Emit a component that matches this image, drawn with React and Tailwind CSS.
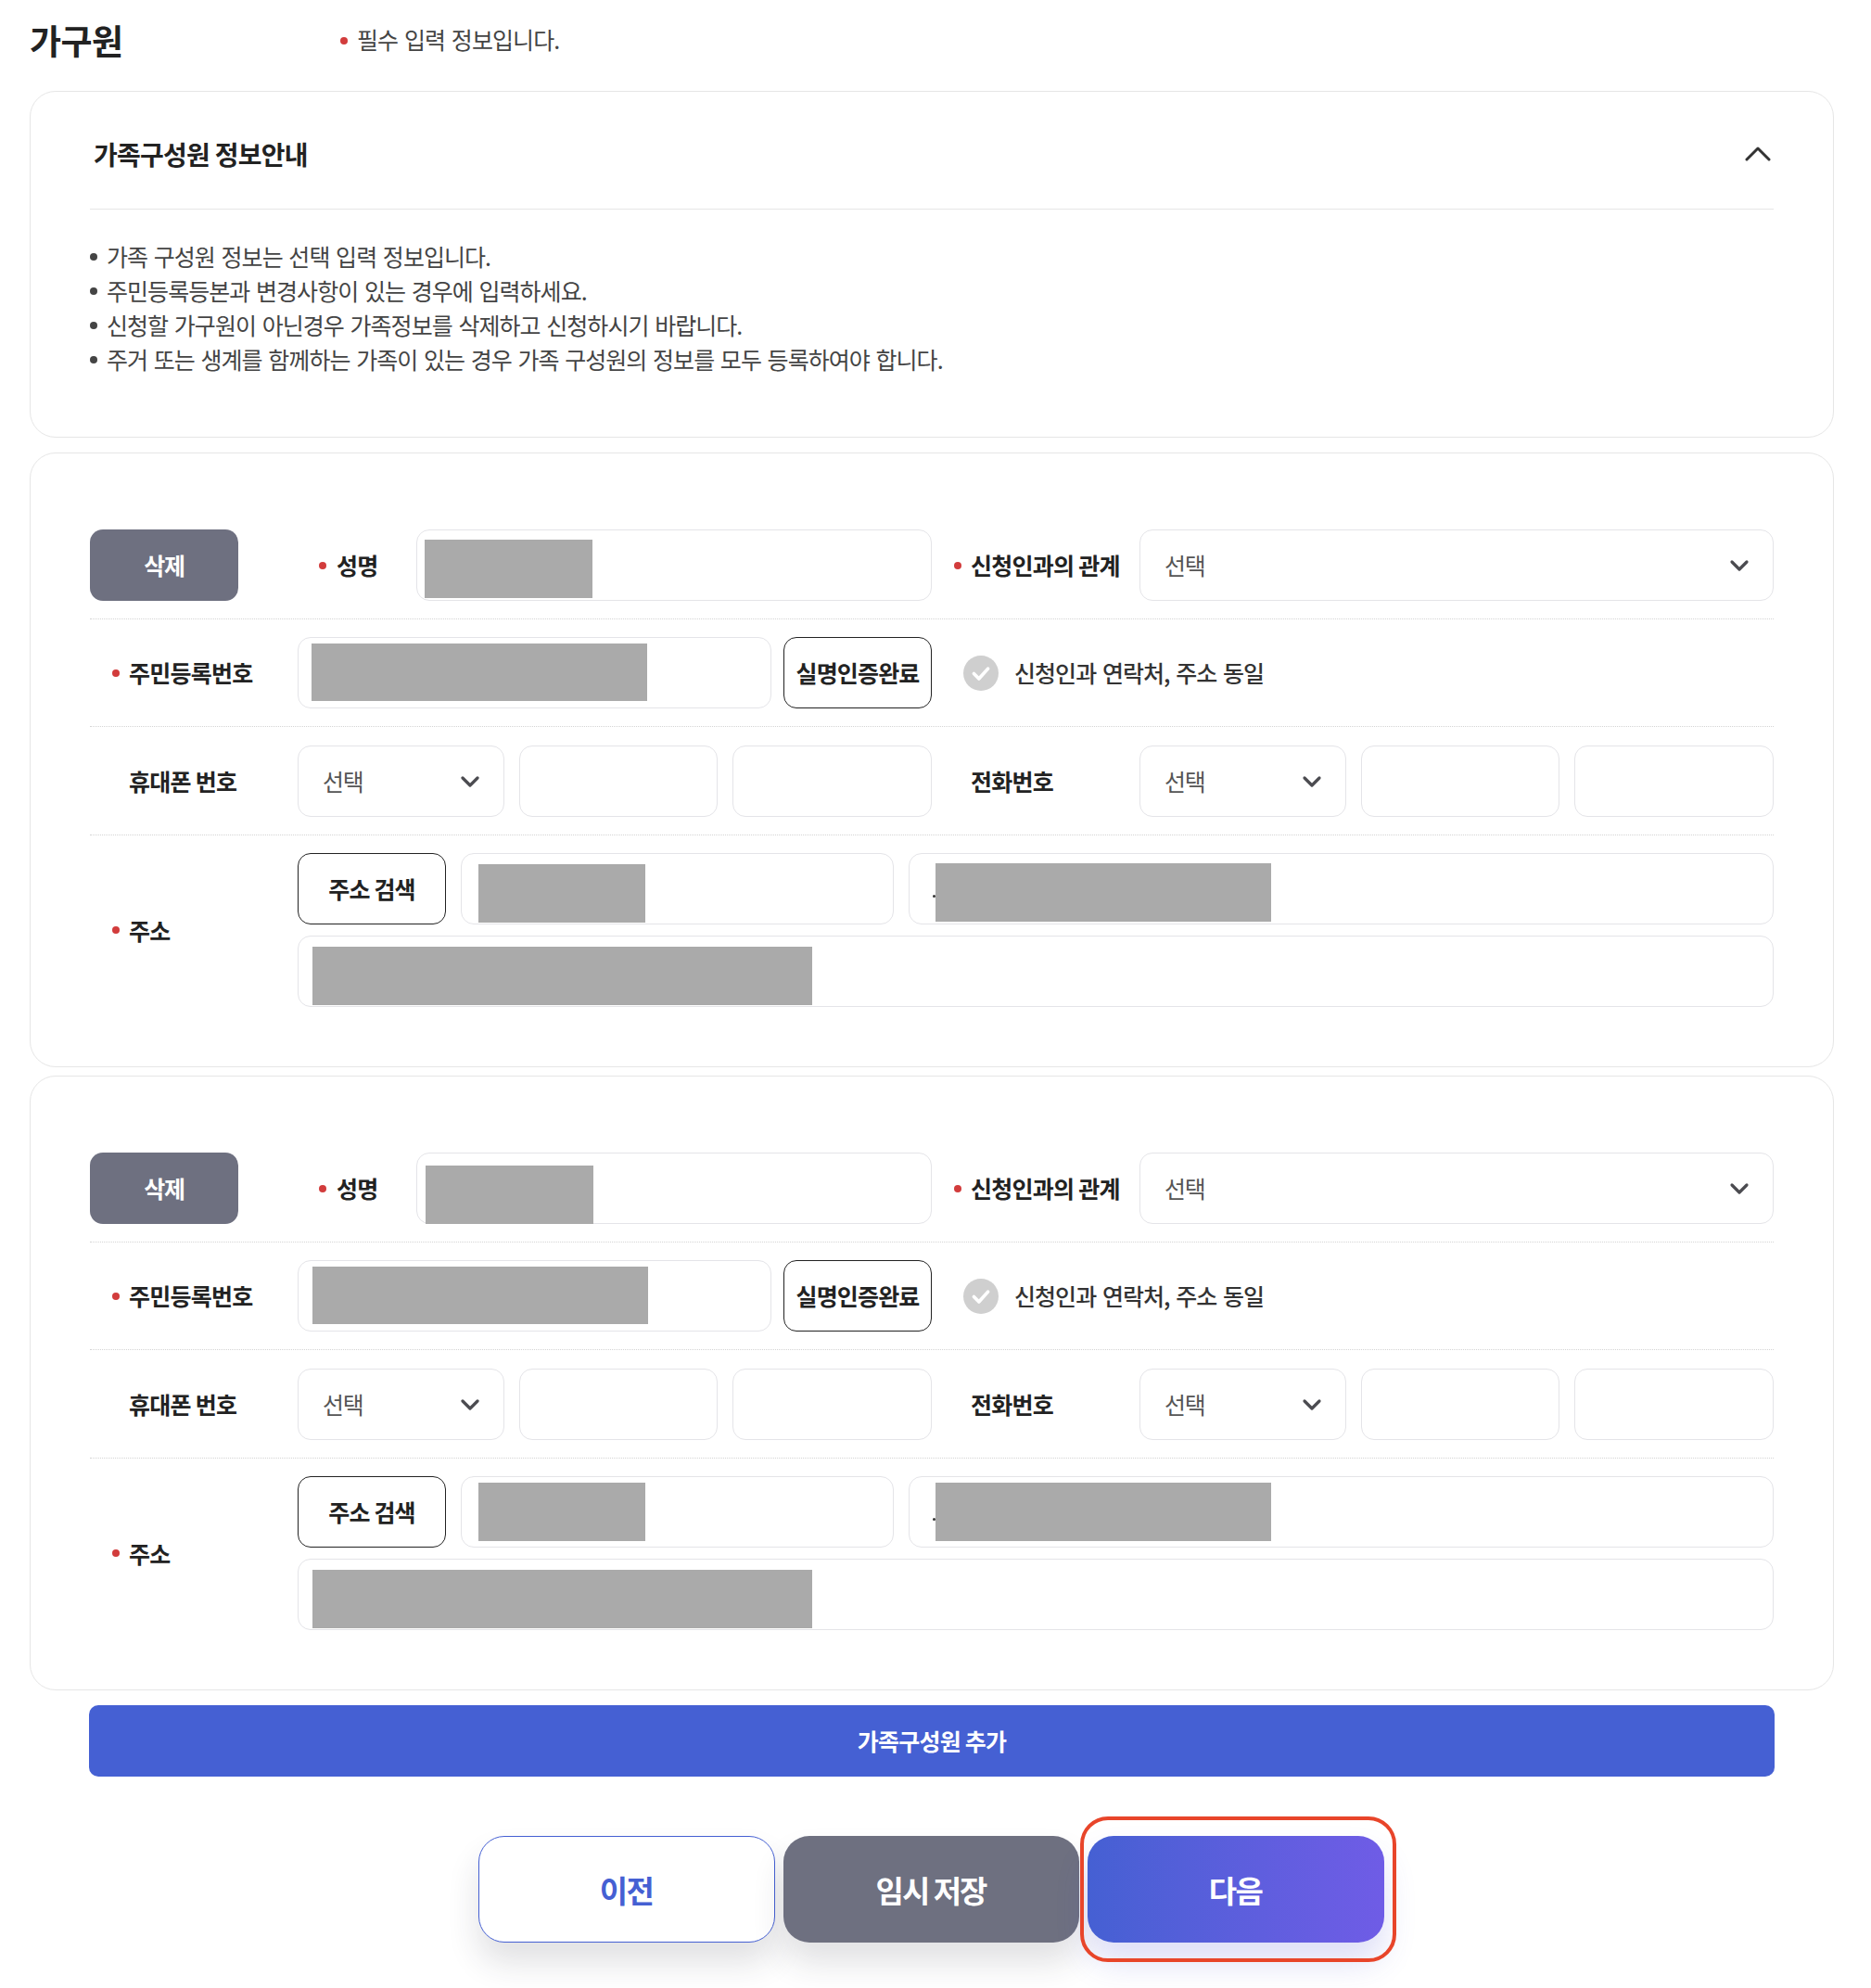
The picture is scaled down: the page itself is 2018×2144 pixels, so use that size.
import React from 'react'

const FONT = '[font-family:"Noto_Sans_CJK_KR","Noto_Sans",sans-serif]'

function Chevron({ className = '' }) {
  return (
    <svg viewBox="0 0 24 24" fill="none" stroke="#4b4b50" strokeWidth="3.2" strokeLinecap="round" strokeLinejoin="round" className={`h-[24px] w-[24px] ${className}`}>
      <path d="M4 8l8 8 8-8" />
    </svg>
  )
}

function Label({ children, required, width = 'w-[224px]' }) {
  return (
    <div className={`relative flex shrink-0 items-center pl-[42px] pt-[1px] text-[25px] font-bold tracking-[-0.75px] text-[#222] ${width}`}>
      {required && <span className="absolute left-[24px] top-1/2 h-[8px] w-[8px] -translate-y-1/2 rounded-full bg-[#d23c3c]" />}
      {children}
    </div>
  )
}

function Field({ width, children, className = '' }) {
  return (
    <div className={`h-[77px] shrink-0 rounded-[14px] border border-[#e4e4e8] bg-white ${width} ${className}`}>
      {children}
    </div>
  )
}

function Select({ width }) {
  return (
    <div className={`flex h-[77px] shrink-0 items-center justify-between rounded-[14px] border border-[#e4e4e8] bg-white pl-[26px] pr-[24px] ${width}`}>
      <span className="pt-[1px] text-[25px] tracking-[-1.2px] text-[#555]">선택</span>
      <Chevron />
    </div>
  )
}

function Masked({ className }) {
  return <div className={`bg-[#aaaaaa] ${className}`} />
}

function OutlineButton({ children }) {
  return (
    <button className="flex h-[77px] w-[160px] shrink-0 items-center justify-center rounded-[14px] border border-[#222] bg-white text-[25px] font-bold tracking-[-0.85px] text-[#222]">
      {children}
    </button>
  )
}

function Row({ children, spacing = 'mb-[19px]' }) {
  return <div className={`flex border-b border-dotted border-[#d4d4d4] pb-[19px] ${spacing}`}>{children}</div>
}

function MemberCard({ second }) {
  return (
    <section className="mt-[9px] rounded-[28px] border border-[#e6e6e6] bg-white px-[64px] pb-[64px] pt-[82px] first:mt-0">
      <Row>
        <button className="flex h-[77px] w-[160px] shrink-0 items-center justify-center rounded-[14px] bg-[#6e7080] pt-[1px] text-[25px] font-bold tracking-[-1.2px] text-white">
          삭제
        </button>
        <Label required width="w-[192px] pl-[106px] [&>span]:left-[87px]">성명</Label>
        <Field width="w-[556px]" className={second ? 'pl-[9px] pt-[13px]' : 'pl-[8px] pt-[10px]'}>
          <Masked className="h-[63px] w-[181px]" />
        </Field>
        <Label required>신청인과의 관계</Label>
        <Select width="w-[684px]" />
      </Row>
      <Row spacing="mb-[20px]">
        <Label required>주민등록번호</Label>
        <Field width="w-[511px]" className={second ? 'pl-[15px] pt-[6px]' : 'pl-[14px] pt-[6px]'}>
          <Masked className="h-[62px] w-[362px]" />
        </Field>
        <div className="ml-[13px]">
          <OutlineButton>실명인증완료</OutlineButton>
        </div>
        <div className="ml-[34px] flex items-center">
          <span className="flex h-[38px] w-[38px] items-center justify-center rounded-full bg-[#cfcfcf]">
            <svg viewBox="0 0 24 24" fill="none" stroke="#fff" strokeWidth="3.4" strokeLinecap="round" strokeLinejoin="round" className="h-[26px] w-[26px]">
              <path d="M5 12.5l5 5 9-10" />
            </svg>
          </span>
          <span className="ml-[17px] pt-[1px] text-[25px] font-medium tracking-[-0.95px] [word-spacing:2px] text-[#333]">신청인과 연락처, 주소 동일</span>
        </div>
      </Row>
      <Row>
        <Label>휴대폰 번호</Label>
        <Select width="w-[223px]" />
        <Field width="w-[214px]" className="ml-[16px]" />
        <Field width="w-[215px]" className="ml-[16px]" />
        <Label>전화번호</Label>
        <Select width="w-[223px]" />
        <Field width="w-[214px]" className="ml-[16px]" />
        <Field width="w-[215px]" className="ml-[16px]" />
      </Row>
      <div className="flex">
        <Label required>주소</Label>
        <div className="flex-1">
          <div className="flex">
            <OutlineButton>주소 검색</OutlineButton>
            <Field width="w-[467px]" className={`ml-[16px] pl-[18px] ${second ? 'pt-[6px]' : 'pt-[11px]'}`}>
              <Masked className="h-[63px] w-[180px]" />
            </Field>
            <Field width="w-[933px]" className={`ml-[16px] flex items-start pl-[25px] ${second ? 'pt-[6px]' : 'pt-[10px]'}`}>
              <span className={`h-[3px] w-[3px] rounded-full bg-[#333] ${second ? 'mt-[38px]' : 'mt-[34px]'}`} />
              <Masked className="h-[63px] w-[362px]" />
            </Field>
          </div>
          <Field width="w-[1592px]" className="mt-[12px] pl-[15px] pt-[11px]">
            <Masked className="h-[63px] w-[539px]" />
          </Field>
        </div>
      </div>
    </section>
  )
}

export default function App() {
  const notices = [
    '가족 구성원 정보는 선택 입력 정보입니다.',
    '주민등록등본과 변경사항이 있는 경우에 입력하세요.',
    '신청할 가구원이 아닌경우 가족정보를 삭제하고 신청하시기 바랍니다.',
    '주거 또는 생계를 함께하는 가족이 있는 경우 가족 구성원의 정보를 모두 등록하여야 합니다.',
  ]

  return (
    <div className={`h-[2144px] w-[2018px] overflow-hidden bg-white pl-[32px] ${FONT}`}>
      <div className="w-[1946px]">
        <header className="flex h-[98px] items-center pb-[10px]">
          <h1 className="w-[335px] text-[37px] font-semibold tracking-[-0.6px] text-[#222]">가구원</h1>
          <span className="h-[8px] w-[8px] rounded-full bg-[#d23c3c]" />
          <p className="mb-[2px] ml-[10px] text-[25px] tracking-[-0.9px] [word-spacing:2px] text-[#444]">필수 입력 정보입니다.</p>
        </header>

        <section className="h-[374px] rounded-[28px] border border-[#e6e6e6] bg-white px-[64px]">
          <div className="flex h-[127px] items-center justify-between border-b border-[#e6e6e6] pl-[4px] pr-[3px] pt-[7px]">
            <h2 className="text-[28px] font-bold tracking-[-0.75px] text-[#222]">가족구성원 정보안내</h2>
            <svg viewBox="0 0 28 28" fill="none" stroke="#333" strokeWidth="3" strokeLinecap="round" strokeLinejoin="round" className="h-[28px] w-[28px]">
              <path d="M2 20L14 8l12 12" />
            </svg>
          </div>
          <ul className="mt-[32px]">
            {notices.map((text) => (
              <li key={text} className="flex h-[37px] items-center text-[25px] tracking-[-0.95px] [word-spacing:2px] text-[#444]">
                <span className="mr-[10px] h-[8px] w-[8px] rounded-full bg-[#444]" />
                {text}
              </li>
            ))}
          </ul>
        </section>

        <div className="mt-[16px]">
          <MemberCard />
          <MemberCard second />
        </div>

        <div className="mt-[16px] px-[64px]">
          <button className="flex h-[77px] w-full items-center justify-center rounded-[10px] bg-[#4560d3] pt-[1px] text-[25px] font-bold tracking-[-0.75px] text-white">
            가족구성원 추가
          </button>
        </div>

        <div className="mt-[64px] flex justify-center gap-[9px] pr-[2px]">
          <button className="h-[115px] w-[320px] rounded-[28px] border border-[#4560d3] bg-white pt-[2px] text-[33px] font-bold tracking-[-1.6px] text-[#4560d3] shadow-[0_22px_34px_rgba(40,40,60,0.14)]">
            이전
          </button>
          <button className="h-[115px] w-[319px] rounded-[28px] bg-[#6e7080] pt-[2px] text-[33px] font-bold tracking-[-2px] text-white shadow-[0_22px_34px_rgba(40,40,60,0.14)]">
            임시 저장
          </button>
          <div className="relative">
            <button className="h-[115px] w-[320px] rounded-[28px] bg-gradient-to-r from-[#4560d3] to-[#6f5ce6] pt-[2px] text-[33px] font-bold tracking-[-1.6px] text-white shadow-[0_22px_34px_rgba(70,80,210,0.18)]">
              다음
            </button>
            <div className="absolute -bottom-[21px] -left-[8px] -right-[13px] -top-[21px] rounded-[30px] border-[4px] border-[#e8452a]" />
          </div>
        </div>
      </div>
    </div>
  )
}
